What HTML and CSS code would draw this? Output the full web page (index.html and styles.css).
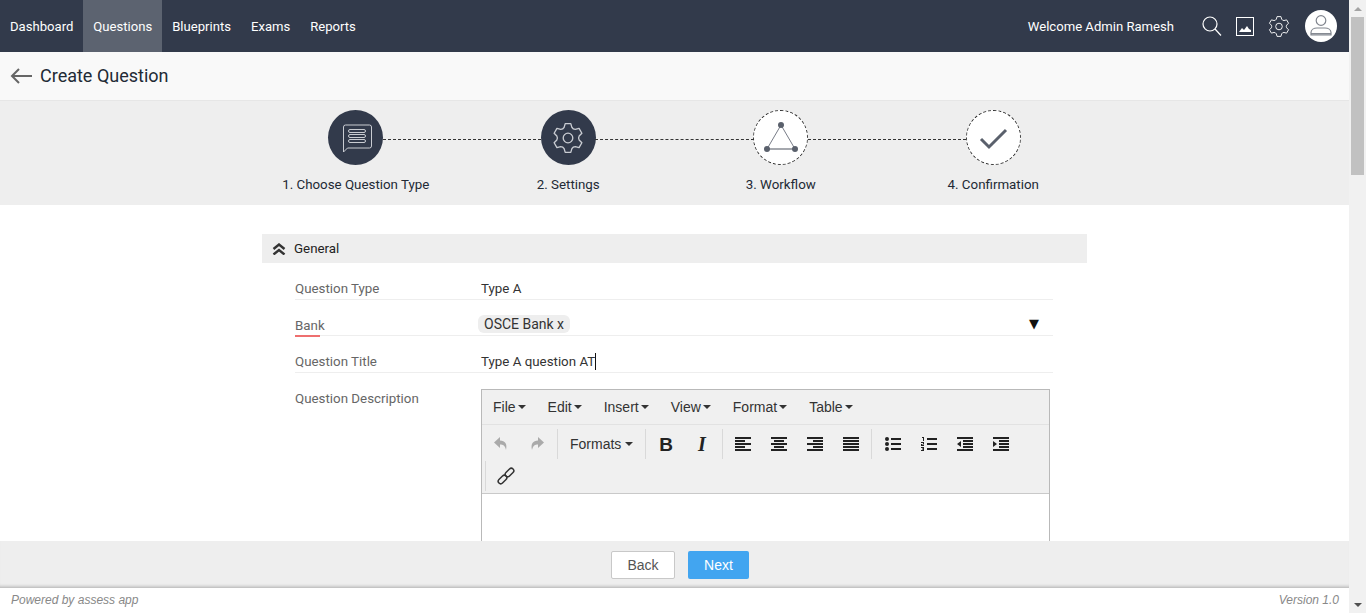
FILE: index.html
```html
<!DOCTYPE html>
<html lang="en">
<head>
    <meta charset="UTF-8">
    <meta name="viewport" content="width=device-width, initial-scale=1.0">
    <title>Create Question</title>
    <link rel="stylesheet" href="styles.css">
</head>
<body>
    <svg class="defs" aria-hidden="true">
        <symbol id="gear" viewBox="0 0 24 24">
            <path fill="none" stroke="currentColor" stroke-linejoin="round" d="M9.09 4.01L9.9 1.2H14.1L14.91 4.01Q15.75 5.5 17.46 5.49L20.3 4.78L22.4 8.42L20.37 10.52Q19.5 12 20.37 13.48L22.4 15.58L20.3 19.22L17.46 18.51Q15.75 18.5 14.91 19.99L14.1 22.8H9.9L9.09 19.99Q8.25 18.5 6.54 18.51L3.7 19.22L1.6 15.58L3.63 13.48Q4.5 12 3.63 10.52L1.6 8.42L3.7 4.78L6.54 5.49Q8.25 5.5 9.09 4.01Z"/>
            <circle cx="12" cy="12" r="3.6" fill="none" stroke="currentColor"/>
        </symbol>
        <symbol id="align-left" viewBox="0 0 16 14">
            <path d="M0 0h16v2H0zM0 3h10v2H0zM0 6h16v2H0zM0 9h10v2H0zM0 12h16v2H0z"/>
        </symbol>
        <symbol id="align-center" viewBox="0 0 16 14">
            <path d="M0 0h16v2H0zM3 3h10v2H3zM0 6h16v2H0zM3 9h10v2H3zM0 12h16v2H0z"/>
        </symbol>
        <symbol id="align-right" viewBox="0 0 16 14">
            <path d="M0 0h16v2H0zM6 3h10v2H6zM0 6h16v2H0zM6 9h10v2H6zM0 12h16v2H0z"/>
        </symbol>
        <symbol id="align-justify" viewBox="0 0 16 14">
            <path d="M0 0h16v2H0zM0 3h16v2H0zM0 6h16v2H0zM0 9h16v2H0zM0 12h16v2H0z"/>
        </symbol>
        <symbol id="list-bullet" viewBox="0 0 16 14">
            <circle cx="2" cy="2" r="2"/><circle cx="2" cy="7" r="2"/><circle cx="2" cy="12" r="2"/>
            <path d="M6 1h10v2H6zM6 6h10v2H6zM6 11h10v2H6z"/>
        </symbol>
        <symbol id="list-number" viewBox="0 0 16 14">
            <path d="M1 0h2v4H2V1H1zM0 5h3v2.5H1v.5h2v1H0V7h2v-1H0zM0 10h3v4H0v-1h2v-.5H1v-1h1V11H0z"/>
            <path d="M6 1h10v2H6zM6 6h10v2H6zM6 11h10v2H6z"/>
        </symbol>
        <symbol id="outdent" viewBox="0 0 16 14">
            <path d="M0 0h16v2H0zM6 3h10v2H6zM6 6h10v2H6zM6 9h10v2H6zM0 12h16v2H0zM4 4v6L0 7z"/>
        </symbol>
        <symbol id="indent" viewBox="0 0 16 14">
            <path d="M0 0h16v2H0zM6 3h10v2H6zM6 6h10v2H6zM6 9h10v2H6zM0 12h16v2H0zM0 4v6l4-3z"/>
        </symbol>
    </svg>

    <div class="page">
        <div class="main">
            <header class="topbar">
                <nav class="nav">
                    <a class="nav-item">Dashboard</a>
                    <a class="nav-item active">Questions</a>
                    <a class="nav-item">Blueprints</a>
                    <a class="nav-item">Exams</a>
                    <a class="nav-item">Reports</a>
                </nav>
                <div class="user-area">
                    <span class="welcome">Welcome Admin Ramesh</span>
                    <svg class="top-icon" width="20" height="20" viewBox="0 0 20 20" fill="none" stroke="#fff" stroke-width="1.2">
                        <circle cx="8" cy="8" r="7"/>
                        <path d="M13 13l6 6.5"/>
                    </svg>
                    <svg class="top-icon" width="18" height="19" viewBox="0 0 18 19">
                        <rect x=".5" y=".5" width="17" height="18" fill="none" stroke="#fff"/>
                        <path fill="#fff" d="M3 15l3-4 2 2 3-4 2 3 2 1v2z"/>
                    </svg>
                    <svg class="top-icon gear-top" width="22" height="23"><use href="#gear"/></svg>
                    <span class="avatar">
                        <svg width="24" height="24" viewBox="0 0 24 24" fill="none" stroke="#80858e" stroke-width="1.2">
                            <circle cx="12" cy="6.500" r="4.800"/>
                            <path d="M2 21v-2.500c0-3 3-4.500 6-4.500h8c3 0 6 1.500 6 4.500V21z"/>
                            <path stroke-width="1.500" d="M2 19.800h20"/>
                        </svg>
                    </span>
                </div>
            </header>

            <div class="title-bar">
                <svg width="22" height="16" viewBox="0 0 22 16" fill="none" stroke="#666" stroke-width="2">
                    <path d="M22 8H2M9 1L2 8l7 7"/>
                </svg>
                <h1>Create Question</h1>
            </div>

            <div class="stepper">
                <div class="step">
                    <span class="step-circle done">
                        <svg width="55" height="55" viewBox="0 0 55 55" fill="none" stroke="#c9ccd2">
                            <path d="M15.500 42V17a2 2 0 0 1 2-2h24a2 2 0 0 1 2 2v19a2 2 0 0 1-2 2H19.500z"/>
                            <rect x="20.500" y="19.500" width="17" height="3" rx="1.500"/>
                            <rect x="20.500" y="24.500" width="17" height="3" rx="1.500"/>
                            <rect x="20.500" y="29.500" width="17" height="3" rx="1.500"/>
                        </svg>
                    </span>
                    <span class="step-label">1. Choose Question Type</span>
                </div>
                <div class="step">
                    <span class="step-circle done">
                        <svg class="step-gear" width="32" height="32"><use href="#gear"/></svg>
                    </span>
                    <span class="step-label">2. Settings</span>
                </div>
                <div class="step">
                    <span class="step-circle">
                        <svg width="53" height="53" viewBox="1 1 53 53">
                            <path fill="none" stroke="#777c87" d="M28 15L14 39"/>
                            <path fill="none" stroke="#777c87" d="M28 15l14 24"/>
                            <path fill="none" stroke="#a5a8ae" stroke-width="2" d="M14 39h28"/>
                            <circle cx="28" cy="15" r="3" fill="#5a606c"/>
                            <circle cx="14" cy="39" r="3" fill="#5a606c"/>
                            <circle cx="42" cy="39" r="3" fill="#5a606c"/>
                        </svg>
                    </span>
                    <span class="step-label">3. Workflow</span>
                </div>
                <div class="step">
                    <span class="step-circle">
                        <svg width="53" height="53" viewBox="1 1 53 53" fill="none" stroke="#5a606c" stroke-width="3">
                            <path d="M15 29l8 8 17-17"/>
                        </svg>
                    </span>
                    <span class="step-label">4. Confirmation</span>
                </div>
            </div>

            <div class="content">
                <section class="panel">
                    <div class="panel-head">
                        <svg width="14" height="12" viewBox="0 0 14 12" fill="none" stroke="#333" stroke-width="2.400">
                            <path d="M1.500 6l5.500-4.500L12.500 6M1.500 11.500L7 7l5.500 4.500"/>
                        </svg>
                        <span>General</span>
                    </div>
                    <div class="fields">
                        <div class="row tall">
                            <label class="row-label">Question Type</label>
                            <span class="row-value">Type A</span>
                        </div>
                        <div class="row bank">
                            <label class="row-label required">Bank</label>
                            <span class="chip">OSCE Bank x</span>
                            <span class="select-arrow">▼</span>
                        </div>
                        <div class="row tall">
                            <label class="row-label">Question Title</label>
                            <span class="row-value caret">Type A question AT</span>
                        </div>
                        <div class="row desc">
                            <label class="row-label">Question Description</label>
                            <div class="editor">
                                <div class="menubar">
                                    <span class="menu-item">File<i class="down"></i></span>
                                    <span class="menu-item">Edit<i class="down"></i></span>
                                    <span class="menu-item">Insert<i class="down"></i></span>
                                    <span class="menu-item">View<i class="down"></i></span>
                                    <span class="menu-item">Format<i class="down"></i></span>
                                    <span class="menu-item">Table<i class="down"></i></span>
                                </div>
                                <div class="toolbar">
                                    <div class="tool-group">
                                        <span class="tool muted">
                                            <svg width="16" height="16" viewBox="0 0 16 16"><path d="M7 1L1 6.500 7 12V8.500c3 0 5 1 6 5.500 1.500-6-1-9.500-6-9.500z"/></svg>
                                        </span>
                                        <span class="tool muted">
                                            <svg class="flip" width="16" height="16" viewBox="0 0 16 16"><path d="M7 1L1 6.500 7 12V8.500c3 0 5 1 6 5.500 1.500-6-1-9.500-6-9.500z"/></svg>
                                        </span>
                                    </div>
                                    <div class="tool-group formats">
                                        <span class="tool-select">Formats<i class="down"></i></span>
                                    </div>
                                    <div class="tool-group">
                                        <span class="tool bold">B</span>
                                        <span class="tool italic">I</span>
                                    </div>
                                    <div class="tool-group">
                                        <span class="tool"><svg width="16" height="14"><use href="#align-left"/></svg></span>
                                        <span class="tool"><svg width="16" height="14"><use href="#align-center"/></svg></span>
                                        <span class="tool"><svg width="16" height="14"><use href="#align-right"/></svg></span>
                                        <span class="tool"><svg width="16" height="14"><use href="#align-justify"/></svg></span>
                                    </div>
                                    <div class="tool-group lists">
                                        <span class="tool"><svg width="16" height="14"><use href="#list-bullet"/></svg></span>
                                        <span class="tool"><svg width="16" height="14"><use href="#list-number"/></svg></span>
                                        <span class="tool"><svg width="16" height="14"><use href="#outdent"/></svg></span>
                                        <span class="tool"><svg width="16" height="14"><use href="#indent"/></svg></span>
                                    </div>
                                    <div class="tool-group links">
                                        <span class="tool">
                                            <svg width="18" height="18" viewBox="0 0 18 18" fill="none" stroke="#333" stroke-width="1.500">
                                                <rect x="-5" y="-2.500" width="10" height="5" rx="2.500" transform="translate(5.500 12.500) rotate(-45)"/>
                                                <rect x="-5" y="-2.500" width="10" height="5" rx="2.500" transform="translate(12.500 5.500) rotate(-45)"/>
                                            </svg>
                                        </span>
                                    </div>
                                </div>
                                <div class="edit-area"></div>
                            </div>
                        </div>
                    </div>
                </section>
            </div>

            <div class="actions">
                <button class="btn">Back</button>
                <button class="btn primary">Next</button>
            </div>

            <footer class="footer">
                <span>Powered by assess app</span>
                <span>Version 1.0</span>
            </footer>
        </div>

        <div class="scrollbar">
            <span class="scroll-btn"><i class="arrow-up"></i></span>
            <span class="scroll-thumb"></span>
            <span class="scroll-space"></span>
            <span class="scroll-btn"><i class="arrow-down"></i></span>
        </div>
    </div>
</body>
</html>
```

FILE: styles.css
```css
* {
    box-sizing: border-box;
}

body {
    margin: 0;
    background-color: #ffffff;
    color: #333333;
    font-family: Roboto, Arial, sans-serif;
    font-size: 13.33px;
    overflow: hidden;
}

.defs {
    display: none;
}

.page {
    display: flex;
    height: 613px;
}

.main {
    display: flex;
    flex-direction: column;
    flex: 1;
    min-width: 0;
}

/* top bar */
.topbar {
    display: flex;
    justify-content: space-between;
    height: 52px;
    flex-shrink: 0;
    background-color: #323a4b;
    color: #ffffff;
    font-size: 13.1px;
}

.nav {
    display: flex;
}

.nav-item {
    display: flex;
    align-items: center;
    padding: 0 10px;
}

.nav-item.active {
    background-color: #5c6370;
}

.user-area {
    display: flex;
    align-items: center;
    padding-right: 12px;
}

.welcome {
    margin-right: 28px;
}

.top-icon {
    margin-right: 14px;
}

.gear-top {
    color: #ffffff;
}

.avatar {
    display: flex;
    align-items: center;
    justify-content: center;
    width: 32px;
    height: 32px;
    margin-left: 1px;
    border-radius: 50%;
    background-color: #ffffff;
}

/* page title */
.title-bar {
    display: flex;
    align-items: center;
    gap: 8px;
    height: 49px;
    flex-shrink: 0;
    padding-left: 10px;
    background-color: #f9f9f9;
    border-bottom: 1px solid #e6e6e6;
}

.title-bar h1 {
    margin: 0 0 2px;
    font-size: 18px;
    font-weight: 400;
    color: #222a35;
}

/* wizard steps */
.stepper {
    display: grid;
    grid-template-columns: repeat(4, 212.5px);
    justify-content: center;
    height: 104px;
    flex-shrink: 0;
    padding-top: 9px;
    background-color: #eeeeee;
}

.step {
    position: relative;
    display: flex;
    flex-direction: column;
    align-items: center;
}

.step:not(:last-child)::after {
    content: "";
    position: absolute;
    top: 29px;
    left: calc(50% + 27px);
    width: 158.5px;
    border-top: 1px dashed #333333;
}

.step-circle {
    display: flex;
    align-items: center;
    justify-content: center;
    width: 55px;
    height: 55px;
    border: 1px dashed #333333;
    border-radius: 50%;
    background-color: #ffffff;
}

.step-circle.done {
    border: 0;
    background-color: #323a4b;
}

.step-gear {
    color: #c9ccd2;
}

.step-label {
    margin-top: 11px;
    color: #222a35;
    line-height: 17px;
}

/* form */
.content {
    flex: 1;
    min-height: 0;
    overflow: hidden;
    padding-top: 29px;
}

.panel {
    width: 825px;
    margin-left: 262px;
}

.panel-head {
    display: flex;
    align-items: center;
    gap: 8px;
    height: 29px;
    padding-left: 10px;
    background-color: #eeeeee;
    color: #222222;
}

.fields {
    padding: 0 34px 0 33px;
}

.row {
    display: flex;
    align-items: flex-end;
    height: 36px;
    padding-bottom: 2px;
    line-height: 17px;
    border-bottom: 1px solid #eeeeee;
}

.row.tall {
    height: 37px;
}

.row.bank {
    position: relative;
}

.row.desc {
    align-items: flex-start;
    height: auto;
    padding: 17px 0 0;
    border-bottom: 0;
}

.row-label {
    width: 186px;
    flex-shrink: 0;
    color: #666666;
}

.row-value {
    color: #333333;
}

.required {
    position: relative;
    top: 1px;
}

.required::after {
    content: "";
    position: absolute;
    left: 0;
    bottom: -3px;
    width: 25px;
    border-bottom: 2px solid #ee6f6f;
}

.chip {
    margin-left: -3px;
    padding: 1px 6px 0;
    height: 18px;
    border-radius: 6px;
    background-color: #eeeeee;
    color: #333333;
    font-size: 14px;
    line-height: 17px;
}

.select-arrow {
    position: absolute;
    right: 14px;
    top: 15px;
    font-family: "DejaVu Sans", sans-serif;
    font-size: 13px;
    line-height: 17px;
    color: #111111;
}

.caret {
    border-right: 1px solid #111111;
}

/* rich text editor */
.editor {
    width: 569px;
    margin-top: -1px;
    border: 1px solid #b9b9b9;
    background-color: #ffffff;
    font-family: "Liberation Sans", Arial, sans-serif;
    font-size: 14px;
}

.menubar {
    display: flex;
    gap: 22px;
    height: 35px;
    align-items: center;
    padding-left: 11px;
    background-color: #f0f0f0;
    border-bottom: 1px solid #e2e2e2;
}

.menu-item {
    display: flex;
    align-items: center;
    color: #333333;
}

.down {
    width: 0;
    height: 0;
    margin-left: 2px;
    border-left: 4px solid transparent;
    border-right: 4px solid transparent;
    border-top: 4px solid #333333;
}

.toolbar {
    display: flex;
    flex-wrap: wrap;
    height: 69px;
    padding-top: 4px;
    background-color: #f0f0f0;
    border-bottom: 1px solid #c9c9c9;
}

.tool-group {
    display: flex;
    align-items: center;
    height: 30px;
    margin-bottom: 2px;
    padding: 0 2px;
    border-right: 1px solid #d9d9d9;
}

.tool-group:first-child {
    padding-left: 1px;
}

.tool-group.formats {
    width: 88px;
    padding: 0;
}

.tool-group.lists {
    padding-left: 2.5px;
    border-right: 0;
}

.tool-group.links {
    margin-left: 3px;
    border-right: 0;
    border-left: 1px solid #d9d9d9;
}

.tool {
    display: flex;
    align-items: center;
    justify-content: center;
    width: 36px;
    height: 30px;
    fill: #222222;
    color: #222222;
}

.tool.muted {
    fill: #aaaaaa;
}

.flip {
    transform: scaleX(-1);
}

.tool.bold {
    font-weight: 700;
    font-size: 19px;
}

.tool.italic {
    font-family: "Liberation Serif", serif;
    font-style: italic;
    font-weight: 700;
    font-size: 20px;
}

.tool-select {
    display: flex;
    align-items: center;
    padding-left: 12px;
    color: #333333;
}

.tool-select .down {
    margin-left: 4px;
}

.edit-area {
    height: 120px;
}

/* bottom */
.actions {
    display: flex;
    justify-content: center;
    align-items: center;
    gap: 13px;
    height: 47px;
    flex-shrink: 0;
    padding: 2px 0 0 11px;
    background-color: #eeeeee;
    border-bottom: 1px solid #c4c4c4;
    box-shadow: inset 0 -3px 3px -2px rgba(0, 0, 0, 0.18);
}

.btn {
    width: 64px;
    height: 28px;
    padding: 0;
    border: 1px solid #c8c8c8;
    border-radius: 2px;
    background-color: #ffffff;
    color: #555555;
    font-family: "Liberation Sans", Arial, sans-serif;
    font-size: 14px;
}

.btn.primary {
    width: 61px;
    border: 0;
    background-color: #42a5f0;
    color: #ffffff;
}

.footer {
    display: flex;
    justify-content: space-between;
    align-items: center;
    height: 25px;
    flex-shrink: 0;
    padding: 0 10px 1px 11px;
    color: #888888;
    font-family: "Liberation Sans", Arial, sans-serif;
    font-size: 12px;
    font-style: italic;
}

/* page scrollbar */
.scrollbar {
    display: flex;
    flex-direction: column;
    width: 17px;
    flex-shrink: 0;
    background-color: #f1f1f1;
}

.scroll-btn {
    display: flex;
    align-items: center;
    justify-content: center;
    height: 17px;
}

.arrow-up,
.arrow-down {
    width: 0;
    height: 0;
    border-left: 4px solid transparent;
    border-right: 4px solid transparent;
}

.arrow-up {
    border-bottom: 4px solid #a3a3a3;
}

.arrow-down {
    border-top: 4px solid #505050;
}

.scroll-thumb {
    height: 158px;
    margin: 0 2px;
    background-color: #c1c1c1;
}

.scroll-space {
    flex: 1;
}
```
